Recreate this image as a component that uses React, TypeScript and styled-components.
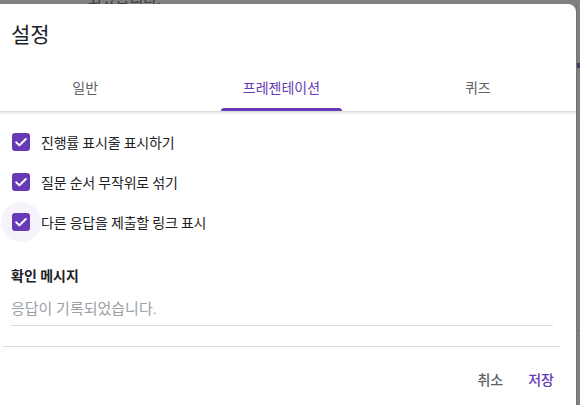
import React, { useState } from 'react';
import styled, { createGlobalStyle } from 'styled-components';

const GlobalStyle = createGlobalStyle`
  html, body {
    margin: 0;
    padding: 0;
    background: #808080;
    overflow: hidden;
  }
  body {
    font-family: Roboto, "Noto Sans CJK KR", "Noto Sans", sans-serif;
  }
`;

const PURPLE = '#673ab7';

const tabs = ['일반', '프레젠테이션', '퀴즈'];

const options = [
  { id: 'progress', label: '진행률 표시줄 표시하기' },
  { id: 'shuffle', label: '질문 순서 무작위로 섞기' },
  { id: 'resubmit', label: '다른 응답을 제출할 링크 표시' },
];

const App = () => {
  const [activeTab, setActiveTab] = useState(1);
  const [checked, setChecked] = useState<Record<string, boolean>>({
    progress: true,
    shuffle: true,
    resubmit: true,
  });
  const [message, setMessage] = useState('');

  const toggle = (id: string) => {
    setChecked((prev) => ({ ...prev, [id]: !prev[id] }));
  };

  return (
    <Backdrop>
      <GlobalStyle />
      <PeekStrip>
        <PeekText>되었습니다.</PeekText>
      </PeekStrip>
      <Stage>
        <Dialog>
          <Title>설정</Title>
          <TabBar>
            {tabs.map((tab, i) => (
              <Tab key={tab} onClick={() => setActiveTab(i)}>
                <TabLabel>
                  <TabText active={i === activeTab}>{tab}</TabText>
                  <Indicator active={i === activeTab} />
                </TabLabel>
              </Tab>
            ))}
          </TabBar>

          <Content>
            <OptionList>
              {options.map((opt, i) => (
                <OptionRow key={opt.id} onClick={() => toggle(opt.id)}>
                  <CheckWrap focused={i === options.length - 1}>
                    <Box checked={checked[opt.id]}>
                      {checked[opt.id] && (
                        <svg width="18" height="18" viewBox="0 0 18 18">
                          <path
                            d="M4.2 9.3 L7.4 12.4 L13.8 6"
                            fill="none"
                            stroke="#fff"
                            strokeWidth="2"
                            strokeLinecap="round"
                            strokeLinejoin="round"
                          />
                        </svg>
                      )}
                    </Box>
                  </CheckWrap>
                  <OptionText>{opt.label}</OptionText>
                </OptionRow>
              ))}
            </OptionList>

            <SectionTitle>확인 메시지</SectionTitle>
            <MessageInput
              type="text"
              placeholder="응답이 기록되었습니다."
              value={message}
              onChange={(e: any) => setMessage(e.target.value)}
            />
          </Content>

          <Divider />

          <Actions>
            <TextButton>취소</TextButton>
            <TextButton primary>저장</TextButton>
          </Actions>
        </Dialog>
        <SideStrip>
          <SideMark />
          <SideLine />
        </SideStrip>
      </Stage>
    </Backdrop>
  );
};

export default App;

const Backdrop = styled.div`
  width: 580px;
  height: 405px;
  display: flex;
  flex-direction: column;
  overflow: hidden;
  background: #808080;
`;

const PeekStrip = styled.div`
  height: 4px;
  flex-shrink: 0;
  overflow: hidden;
  display: flex;
  align-items: flex-end;
  padding-left: 88px;
`;

const PeekText = styled.span`
  font-family: "Noto Sans CJK KR", sans-serif;
  font-size: 15px;
  line-height: 15px;
  color: #3c3c3c;
  margin-bottom: -2px;
`;

const Stage = styled.div`
  flex: 1;
  display: flex;
  min-height: 0;
`;

const Dialog = styled.div`
  width: 589px;
  margin-left: -13px;
  flex-shrink: 0;
  background: #fff;
  border-radius: 8px 8px 0 0;
  display: flex;
  flex-direction: column;
`;

const Title = styled.h1`
  margin: 0;
  padding: 17px 24px 14px;
  font-size: 21px;
  line-height: 28px;
  font-weight: 400;
  color: #202124;
  font-family: Roboto, "Noto Sans CJK KR", sans-serif;
`;

const TabBar = styled.div`
  display: grid;
  grid-template-columns: repeat(3, 1fr);
  height: 48px;
  border-bottom: 1px solid #dadce0;
  box-shadow: 0 1px 2px rgba(60, 64, 67, 0.18);
  position: relative;
  z-index: 1;
`;

const Tab = styled.div`
  display: flex;
  justify-content: center;
  cursor: pointer;
`;

const TabLabel = styled.div`
  display: flex;
  flex-direction: column;
  padding: 0 22px;
`;

const TabText = styled.span<{ active?: boolean }>`
  flex: 1;
  display: flex;
  align-items: center;
  justify-content: center;
  padding-top: 2px;
  font-size: 14px;
  font-weight: 400;
  color: ${(p) => (p.active ? PURPLE : '#5f6368')};
`;

const Indicator = styled.div<{ active?: boolean }>`
  height: 3px;
  border-radius: 3px 3px 0 0;
  background: ${(p) => (p.active ? PURPLE : 'transparent')};
  margin: 0 -22px;
`;

const Content = styled.div`
  padding: 10px 23px 0 24px;
  display: flex;
  flex-direction: column;
`;

const OptionList = styled.div`
  display: flex;
  flex-direction: column;
`;

const OptionRow = styled.label`
  display: flex;
  align-items: center;
  height: 40px;
  cursor: pointer;
`;

const CheckWrap = styled.div<{ focused?: boolean }>`
  width: 40px;
  height: 40px;
  margin-left: -10px;
  border-radius: 50%;
  display: grid;
  place-items: center;
  background: ${(p) => (p.focused ? 'rgba(103, 58, 183, 0.06)' : 'transparent')};
`;

const Box = styled.div<{ checked?: boolean }>`
  width: 18px;
  height: 18px;
  border-radius: 3px;
  box-sizing: border-box;
  background: ${(p) => (p.checked ? PURPLE : 'transparent')};
  border: ${(p) => (p.checked ? 'none' : '2px solid #5f6368')};
  display: grid;
  place-items: center;
`;

const OptionText = styled.span`
  font-size: 14px;
  color: #202124;
  letter-spacing: -0.2px;
`;

const SectionTitle = styled.div`
  margin-top: 24px;
  font-size: 14px;
  line-height: 20px;
  font-weight: 700;
  color: #202124;
`;

const MessageInput = styled.input`
  margin-top: 6px;
  height: 33px;
  padding: 0;
  border: none;
  border-bottom: 1px solid #dadce0;
  outline: none;
  font-family: Roboto, "Noto Sans CJK KR", sans-serif;
  font-size: 15px;
  color: #202124;
  background: transparent;
  &::placeholder {
    color: #9aa0a6;
  }
`;

const Divider = styled.div`
  margin: 20px 16px 0;
  height: 1px;
  background: #dadce0;
`;

const Actions = styled.div`
  display: flex;
  justify-content: flex-end;
  gap: 9px;
  padding: 14px 14px 0 16px;
`;

const TextButton = styled.button<{ primary?: boolean }>`
  height: 36px;
  padding: 0 8px;
  border: none;
  background: none;
  font-family: Roboto, "Noto Sans CJK KR", sans-serif;
  font-size: 14px;
  font-weight: 500;
  color: ${(p) => (p.primary ? PURPLE : '#5f6368')};
  cursor: pointer;
`;

const SideStrip = styled.div`
  flex: 1;
  display: flex;
  flex-direction: column;
  border-left: 1px solid #737373;
`;

const SideMark = styled.div`
  margin-top: 59px;
  height: 5px;
  background: #4a3d6b;
`;

const SideLine = styled.div`
  margin-top: 262px;
  height: 1px;
  background: #6e6e6e;
`;
